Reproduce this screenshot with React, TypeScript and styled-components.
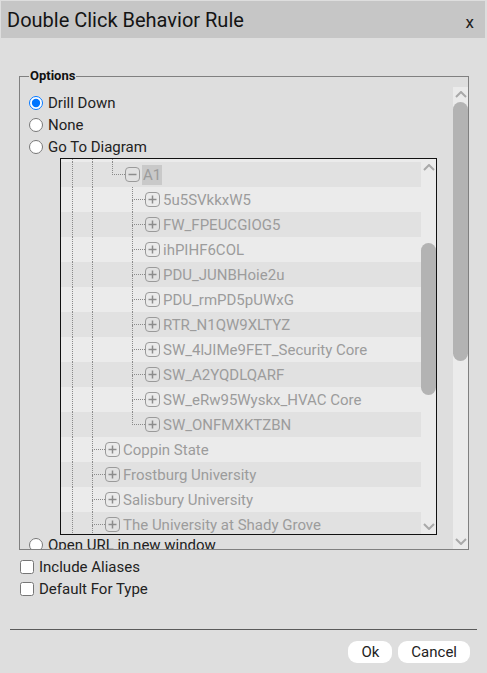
import React from 'react'
import styled, { createGlobalStyle } from 'styled-components'

const GlobalStyle = createGlobalStyle`
  html, body {
    margin: 0;
    padding: 0;
    background: #dedede;
  }
  body {
    font-family: Roboto, "Liberation Sans", sans-serif;
    color: #222;
  }
`

const Dialog = styled.div`
  width: 487px;
  height: 673px;
  background: #dedede;
  display: flex;
  flex-direction: column;
  overflow: hidden;
`

const Header = styled.div`
  height: 37px;
  margin: 1px 2px 0 1px;
  padding: 0 11px 0 6px;
  background: #c6c6c6;
  display: flex;
  align-items: center;
  justify-content: space-between;
`

const Title = styled.h1`
  margin: 0;
  font-size: 20px;
  font-weight: 400;
  color: #141414;
`

const Close = styled.span`
  font-size: 17px;
  color: #222;
  margin-top: 5px;
  cursor: pointer;
`

const Body = styled.div`
  padding: 0 10px;
  display: flex;
  flex-direction: column;
`

const Options = styled.fieldset`
  margin: 29px 0 0 9px;
  padding: 0;
  width: 450px;
  box-sizing: border-box;
  border: 1px solid #808080;
  min-width: 0;
`

const Legend = styled.legend`
  margin-left: 9px;
  padding: 0 1px;
  font-size: 13px;
  font-weight: 700;
  line-height: 18px;
  color: #111;
`

const OptionsInner = styled.div`
  display: flex;
  height: 464px;
`

const ScrollArea = styled.div`
  flex: 1;
  overflow: hidden;
  padding: 7px 0 0 9px;
`

const ChoiceRow = styled.label`
  display: flex;
  align-items: center;
  height: 22px;
  font-size: 15px;
  color: #222;
  cursor: pointer;
`

const Radio = styled.input.attrs({ type: 'radio' })`
  width: 14px;
  height: 14px;
  margin: 0 5px 0 0;
  accent-color: #0075ff;
`

const Check = styled.input.attrs({ type: 'checkbox' })`
  width: 14px;
  height: 14px;
  margin: 0 5px 0 0;
`

const TreeBox = styled.div`
  margin: 0 0 -1px 31px;
  width: 377px;
  height: 377px;
  box-sizing: border-box;
  border: 1px solid #111;
  display: flex;
  background: #ebebeb;
`

const TreeViewport = styled.div`
  flex: 1;
  overflow: hidden;
`

const Row = styled.div<{ $dark?: boolean; $h?: number }>`
  display: flex;
  align-items: stretch;
  height: ${p => p.$h ?? 25}px;
  background: ${p => (p.$dark ? '#e1e1e1' : '#ebebeb')};
`

const Guide = styled.div<{ $on: boolean }>`
  flex: none;
  box-sizing: border-box;
  width: 9px;
  margin-left: 11px;
  border-left: 1px dotted ${p => (p.$on ? '#8a8a8a' : 'transparent')};
`

const Connector = styled.div`
  flex: none;
  width: 13px;
  margin-left: 11px;
  display: flex;
  flex-direction: column;
`

const ConnTop = styled.div`
  flex: 1;
  border-left: 1px dotted #8a8a8a;
  border-bottom: 1px dotted #8a8a8a;
`

const ConnBottom = styled.div<{ $on: boolean }>`
  flex: 1;
  border-left: 1px dotted ${p => (p.$on ? '#8a8a8a' : 'transparent')};
`

const Toggle = styled.svg`
  flex: none;
  align-self: center;
  width: 15px;
  height: 15px;
  margin-top: -1px;
`

const NodeLabel = styled.span<{ $selected?: boolean }>`
  align-self: center;
  margin-left: 2px;
  padding: 0 1px;
  font-size: 15px;
  line-height: 20px;
  color: #9c9c9c;
  white-space: nowrap;
  background: ${p => (p.$selected ? '#c9c9c9' : 'transparent')};
`

const Track = styled.div`
  flex: none;
  width: 15px;
  background: #ebebeb;
  display: flex;
  flex-direction: column;
`

const ArrowBox = styled.div<{ $h: number }>`
  flex: none;
  height: ${p => p.$h}px;
  display: flex;
  align-items: center;
  justify-content: center;
`

const ThumbGap = styled.div<{ $h: number }>`
  flex: none;
  height: ${p => p.$h}px;
`

const Thumb = styled.div<{ $h: number }>`
  flex: none;
  height: ${p => p.$h}px;
  background: #b3b3b3;
  border-radius: 7.5px;
`

const TrackFill = styled.div`
  flex: 1;
`

const OuterTrack = styled(Track)`
  margin-top: 2px;
`

const Extras = styled.div`
  margin-top: 6px;
  padding-left: 10px;
`

const Separator = styled.hr`
  margin: 29px 0 0;
  border: 0;
  border-top: 1px solid #5a5a5a;
  height: 0;
`

const Footer = styled.div`
  display: flex;
  justify-content: flex-end;
  gap: 6px;
  margin-top: 11px;
  padding-right: 7px;
`

const Button = styled.button`
  height: 22px;
  padding: 0 13px;
  border: 0;
  border-radius: 9px;
  background: #fff;
  font-family: Roboto, "Liberation Sans", sans-serif;
  font-size: 15px;
  color: #222;
  cursor: pointer;
`

const Chevron = ({ down }: { down?: boolean }) => (
  <svg width="12" height="7" viewBox="0 0 12 7">
    <polyline
      points={down ? '1,1 6,6 11,1' : '1,6 6,1 11,6'}
      fill="none"
      stroke="#a9a9a9"
      strokeWidth="2"
    />
  </svg>
)

const Scrollbar = ({
  arrow,
  gap,
  thumb,
  Wrap = Track,
}: {
  arrow: number
  gap: number
  thumb: number
  Wrap?: typeof Track
}) => (
  <Wrap>
    <ArrowBox $h={arrow}>
      <Chevron />
    </ArrowBox>
    <ThumbGap $h={gap} />
    <Thumb $h={thumb} />
    <TrackFill />
    <ArrowBox $h={arrow}>
      <Chevron down />
    </ArrowBox>
  </Wrap>
)

const ToggleIcon = ({ open }: { open?: boolean }) => (
  <Toggle viewBox="0 0 15 15">
    <rect x="0.5" y="0.5" width="14" height="14" rx="3.5" fill="none" stroke="#9a9a9a" />
    <line x1="3.5" y1="7.5" x2="11.5" y2="7.5" stroke="#8c8c8c" strokeWidth="1.5" />
    {!open && <line x1="7.5" y1="3.5" x2="7.5" y2="11.5" stroke="#8c8c8c" strokeWidth="1.5" />}
  </Toggle>
)

type Node = {
  guides: boolean[]
  last?: boolean
  open?: boolean
  selected?: boolean
  label: string
}

const child = (label: string, last = false): Node => ({ guides: [true, true, false], label, last })
const site = (label: string): Node => ({ guides: [true], label })

const nodes: Node[] = [
  { guides: [true, true], last: true, open: true, selected: true, label: 'A1' },
  child('5u5SVkkxW5'),
  child('FW_FPEUCGIOG5'),
  child('ihPIHF6COL'),
  child('PDU_JUNBHoie2u'),
  child('PDU_rmPD5pUWxG'),
  child('RTR_N1QW9XLTYZ'),
  child('SW_4lJIMe9FET_Security Core'),
  child('SW_A2YQDLQARF'),
  child('SW_eRw95Wyskx_HVAC Core'),
  child('SW_ONFMXKTZBN', true),
  site('Coppin State'),
  site('Frostburg University'),
  site('Salisbury University'),
  site('The University at Shady Grove'),
]

const TreeRow = ({ node, dark }: { node: Node; dark: boolean }) => (
  <Row $dark={dark}>
    {node.guides.map((on, i) => (
      <Guide key={i} $on={on} />
    ))}
    <Connector>
      <ConnTop />
      <ConnBottom $on={!node.last} />
    </Connector>
    <ToggleIcon open={node.open} />
    <NodeLabel $selected={node.selected}>{node.label}</NodeLabel>
  </Row>
)

const App: React.FC = () => {
  return (
    <Dialog>
      <GlobalStyle />
      <Header>
        <Title>Double Click Behavior Rule</Title>
        <Close>x</Close>
      </Header>
      <Body>
        <Options>
          <Legend>Options</Legend>
          <OptionsInner>
            <ScrollArea>
              <ChoiceRow>
                <Radio name="rule" defaultChecked />
                Drill Down
              </ChoiceRow>
              <ChoiceRow>
                <Radio name="rule" />
                None
              </ChoiceRow>
              <ChoiceRow>
                <Radio name="rule" />
                Go To Diagram
              </ChoiceRow>
              <TreeBox>
                <TreeViewport>
                  <Row $h={3}>
                    <Guide $on />
                    <Guide $on />
                    <Guide $on />
                  </Row>
                  {nodes.map((n, i) => (
                    <TreeRow key={n.label} node={n} dark={i % 2 === 0} />
                  ))}
                </TreeViewport>
                <Scrollbar arrow={16} gap={68} thumb={152} />
              </TreeBox>
              <ChoiceRow>
                <Radio name="rule" />
                Open URL in new window
              </ChoiceRow>
            </ScrollArea>
            <Scrollbar arrow={15} gap={0} thumb={259} Wrap={OuterTrack} />
          </OptionsInner>
        </Options>
        <Extras>
          <ChoiceRow>
            <Check />
            Include Aliases
          </ChoiceRow>
          <ChoiceRow>
            <Check />
            Default For Type
          </ChoiceRow>
        </Extras>
        <Separator />
        <Footer>
          <Button>Ok</Button>
          <Button>Cancel</Button>
        </Footer>
      </Body>
    </Dialog>
  )
}

export default App
